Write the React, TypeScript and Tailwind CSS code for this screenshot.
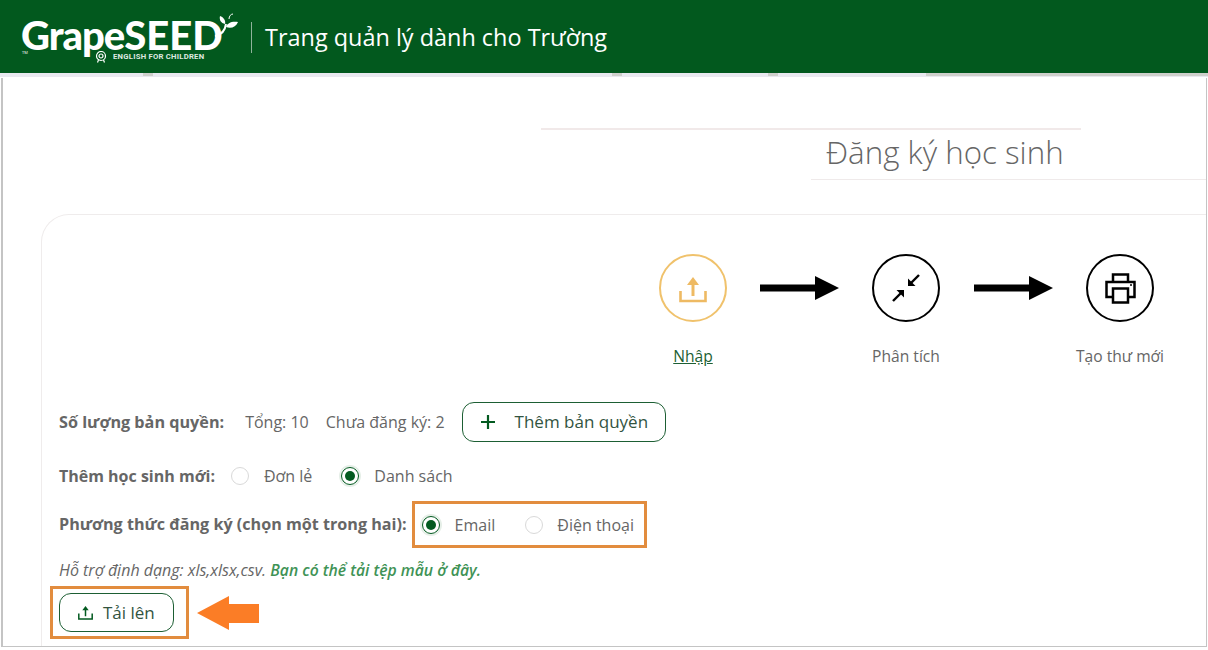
const font = { fontFamily: '"Open Sans", "Noto Sans", sans-serif' };

function Radio({ checked }: { checked?: boolean }) {
  if (checked) {
    return (
      <span className="flex h-[18px] w-[18px] shrink-0 items-center justify-center rounded-full border border-[#035a20] shadow-[0_0_0_2px_#e6efe8]">
        <span className="h-[10px] w-[10px] rounded-full bg-[#035a20]" />
      </span>
    );
  }
  return <span className="block h-[18px] w-[18px] shrink-0 rounded-full border border-[#d9d9d9] bg-white" />;
}

function UploadIcon({ size, stroke, tray, color }: { size: number; stroke: number; tray: number; color: string }) {
  return (
    <svg width={size} height={size} viewBox="0 0 28 28" fill="none" className="shrink-0">
      <path d="M1.500 16v10h25V16" stroke={color} strokeWidth={tray} />
      <path d="M14 7v14" stroke={color} strokeWidth={stroke} />
      <path d="M8 10 14 2l6 8z" fill={color} />
    </svg>
  );
}

function Logo() {
  return (
    <div className="relative h-[56px] w-[218px] shrink-0 text-white">
      <div className="absolute left-0 top-[11px] flex items-baseline font-['Lato'] text-[40px] leading-[30px] font-black tracking-[-1px]">
        <span>Grape</span>
        <span className="tracking-[0px]">SEED</span>
      </div>
      <svg className="absolute left-[193px] top-[3px]" width="30" height="26" viewBox="0 0 30 26" fill="none">
        <path d="M1 24c6-1 10-5 11-12" stroke="#fff" strokeWidth="2" />
        <path d="M12 15c1-4 6-6 12-5-2 5-7 7-12 5z" fill="#fff" />
        <path d="M11 12C7 11 5 8 6 4c3 1 6 4 5 8z" fill="#fff" />
        <path d="M15 7c0-3 2-5 4-5" stroke="#fff" strokeWidth="1" />
      </svg>
      <div className="absolute left-[74px] top-[42px] flex items-center gap-[6px]">
        <svg width="12" height="12" viewBox="0 0 12 12" fill="none" stroke="#fff" strokeWidth="1.2">
          <circle cx="6" cy="5" r="4.500" />
          <circle cx="6" cy="5" r="2" />
          <path d="M3.500 9 2.500 11.500M8.500 9l1 2.500" />
        </svg>
        <span className="font-['Roboto'] text-[7.700px] leading-[10px] font-bold tracking-[0.25px] text-[#dfe9e1]">
          ENGLISH FOR CHILDREN
        </span>
      </div>
      <span className="absolute left-[1px] top-[42px] text-[4px] leading-[4px]">TM</span>
    </div>
  );
}

function Step({ label, active, children }: { label: string; active?: boolean; children: React.ReactNode }) {
  return (
    <div className="flex w-[100px] flex-col items-center">
      <div
        className={`flex h-[68px] w-[68px] items-center justify-center rounded-full border-2 ${
          active ? 'border-[#f0c26c]' : 'border-black'
        }`}
      >
        {children}
      </div>
      <span
        className={`mt-[24px] whitespace-nowrap text-[15.600px] leading-[20px] ${
          active ? 'text-[#1d5f34] underline' : 'text-[#666666]'
        }`}
      >
        {label}
      </span>
    </div>
  );
}

function Arrow() {
  return (
    <svg className="mb-[44px] shrink-0" width="79" height="24" viewBox="0 0 79 24">
      <path d="M0 8.500h55V0l24 12-24 12v-8.500H0z" fill="#000" />
    </svg>
  );
}

function HeaderStrip() {
  return (
    <div className="flex h-[4px] shrink-0 bg-[#e9e9f0]">
      <div className="ml-[143px] h-[3px] w-[10px] bg-[#cfd0cc]" />
      <div className="ml-[459px] h-[3px] w-[10px] bg-[#cfd0cc]" />
      <div className="ml-[146px] h-[3px] w-[10px] bg-[#cfd0cc]" />
      <div className="ml-[148px] h-[3px] flex-1 bg-[#cfd0cc]" />
    </div>
  );
}

export default function App() {
  return (
    <div className="flex h-[650px] w-[1208px] flex-col overflow-hidden bg-white" style={font}>
      <header className="flex h-[73px] shrink-0 items-center bg-[#02591e] pl-[21px] pt-[1px]">
        <Logo />
        <div className="ml-[12px] h-[31px] w-px bg-[#8fb39b]" />
        <h1 className="ml-[13px] text-[23.450px] leading-[32px] text-white">Trang quản lý dành cho Trường</h1>
      </header>
      <HeaderStrip />

      <main className="mb-[3px] ml-px mr-px mt-px flex min-h-0 flex-1 flex-col border-b border-r border-l-2 border-[#c4c4c4]">
        <div className="ml-[538px] mt-[50px] h-[2px] w-[540px] bg-[#f1e9e9]" />
        <div className="ml-[808px] flex h-[50px] items-center border-b border-[#efeaea] pb-[5px] pl-[15px]">
          <h2 className="text-[31.300px] leading-[40px] font-light text-[#666666]">Đăng ký học sinh</h2>
        </div>

        <section className="ml-[38px] mt-[34px] flex-1 rounded-tl-[28px] border-l border-t border-[#efecec] pl-[17px] text-[#666666]">
          <div className="ml-[584px] mt-[39px] flex items-center">
            <Step label="Nhập" active>
              <span className="mt-[2px]">
                <UploadIcon size={28} stroke={3} tray={2.6} color="#eeba63" />
              </span>
            </Step>
            <div className="ml-[17px] mr-[17px]">
              <Arrow />
            </div>
            <Step label="Phân tích">
              <svg width="28" height="28" viewBox="0 0 28 28" fill="#000">
                <path d="M27 1 19 9" stroke="#000" strokeWidth="2.400" />
                <path d="M16 12V4.500L23.500 12z" />
                <path d="M1 27 9 19" stroke="#000" strokeWidth="2.400" />
                <path d="M12 16V23.500L4.500 16z" />
              </svg>
            </Step>
            <div className="ml-[18px] mr-[17px]">
              <Arrow />
            </div>
            <Step label="Tạo thư mới">
              <svg width="31" height="31" viewBox="0 0 31 31" fill="none" stroke="#000" strokeWidth="2.500">
                <path d="M8 9V1.500h15V9" />
                <path d="M8 24H1.500V9h28v15H23" />
                <path d="M8 15.500h15v14H8z" />
                <path d="M25 12h2" strokeWidth="1.500" />
              </svg>
            </Step>
          </div>

          <div className="mt-[36px] flex h-[40px] items-center text-[16px]">
            <span className="text-[16.200px] font-bold">Số lượng bản quyền:</span>
            <span className="ml-[21px]">Tổng: 10</span>
            <span className="ml-[17px]">Chưa đăng ký: 2</span>
            <button className="ml-[17px] flex h-[40px] w-[204px] items-center rounded-[12px] border border-[#1d5f34] pl-[13px] text-[17px] text-[#32543f]">
              <svg width="24" height="24" viewBox="0 0 24 24" fill="none" stroke="#035a20" strokeWidth="2.200" className="shrink-0">
                <path d="M12 5v14M5 12h14" />
              </svg>
              <span className="ml-[15px] whitespace-nowrap">Thêm bản quyền</span>
            </button>
          </div>

          <div className="mt-[20px] flex h-[28px] items-center text-[16px]">
            <span className="font-bold">Thêm học sinh mới:</span>
            <span className="ml-[16px]">
              <Radio />
            </span>
            <span className="ml-[15px]">Đơn lẻ</span>
            <span className="ml-[29px]">
              <Radio checked />
            </span>
            <span className="ml-[15px]">Danh sách</span>
          </div>

          <div className="mt-[11px] flex h-[47px] items-center text-[16px]">
            <span className="text-[16.150px] font-bold">Phương thức đăng ký (chọn một trong hai):</span>
            <div className="ml-[5px] flex h-[47px] w-[235px] items-center border-[3px] border-[#e28c3e] pl-[7px]">
              <Radio checked />
              <span className="ml-[15px]">Email</span>
              <span className="ml-[30px]">
                <Radio />
              </span>
              <span className="ml-[14px]">Điện thoại</span>
            </div>
          </div>

          <p className="mt-[12px] text-[16px] leading-[20px] italic">
            Hỗ trợ định dạng: xls,xlsx,csv.{' '}
            <span className="text-[15.700px] font-semibold text-[#3f9356]">Bạn có thể tải tệp mẫu ở đây.</span>
          </p>

          <div className="mt-[6px] flex items-center">
            <div className="-ml-[9px] flex h-[53px] w-[139px] items-center border-[3px] border-[#e28c3e] pl-[6px]">
              <button className="flex h-[39px] w-[115px] items-center rounded-[12px] border border-[#1d5f34] pl-[18px] text-[17px] text-[#32543f]">
                <UploadIcon size={15} stroke={2.800} tray={2.800} color="#035a20" />
                <span className="ml-[10px] whitespace-nowrap">Tải lên</span>
              </button>
            </div>
            <svg className="ml-[8px]" width="63" height="34" viewBox="0 0 63 34">
              <path d="M0 17 32 0v8h30v19H32v7z" fill="#fb7d26" />
            </svg>
          </div>
        </section>
      </main>
    </div>
  );
}
